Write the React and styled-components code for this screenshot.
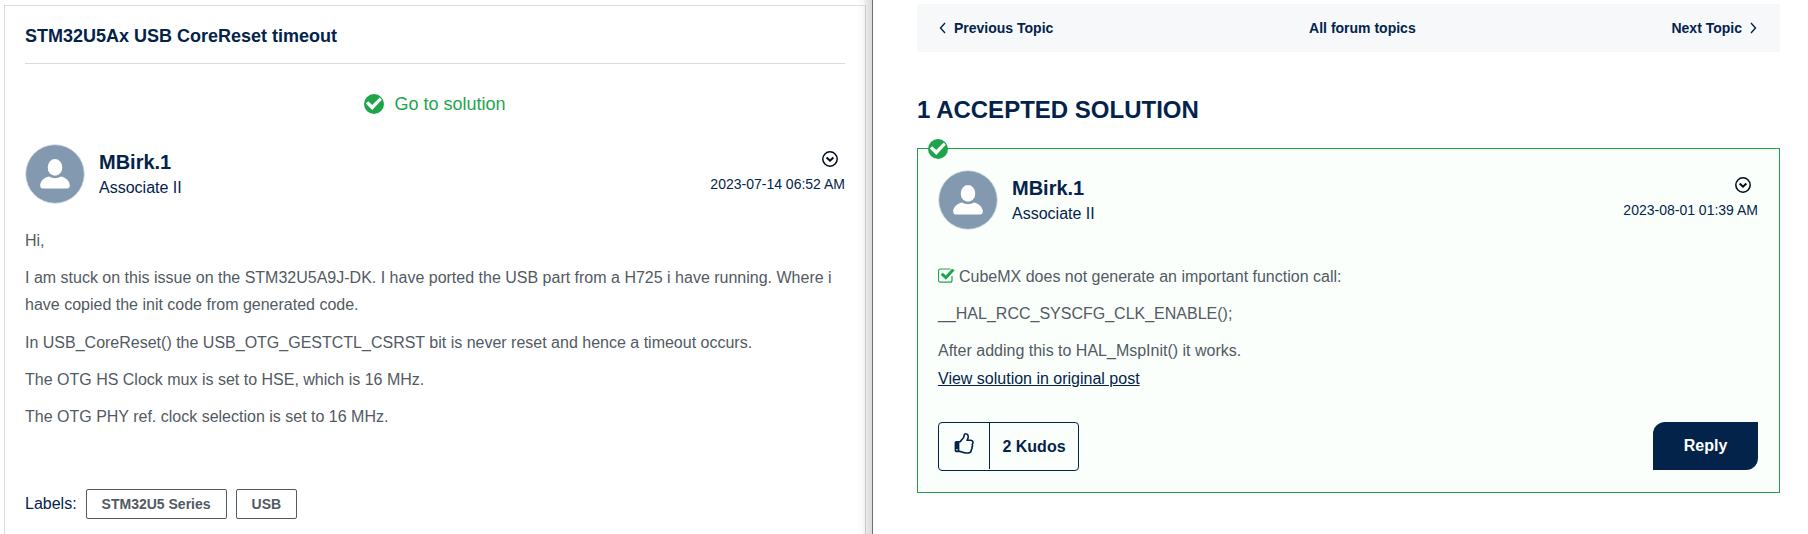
import React from 'react';
import styled, { createGlobalStyle } from 'styled-components';

const NAVY = '#03234b';
const GREEN = '#1ea54c';
const GREY = '#525a63';

const GlobalStyle = createGlobalStyle`
  *, *::before, *::after { box-sizing: border-box; }
  body {
    margin: 0;
    background: #fff;
    color: ${NAVY};
    font-family: Arial, "Liberation Sans", sans-serif;
    font-size: 16px;
    overflow: hidden;
  }
  p, h1, h2 { margin: 0; }
  svg { display: block; }
`;

const Page = styled.main`
  display: flex;
  width: 1808px;
  height: 534px;
  overflow: hidden;
`;

const QuestionPane = styled.section`
  flex: none;
  width: 873px;
  height: 534px;
  padding: 5px 6px 0 4px;
  border-right: 1px solid #6f6f6f;
  background: linear-gradient(to left, #dadada 0, #e9e9e9 6px, #f8f8f8 9px, #fff 16px);
`;

const QuestionCard = styled.article`
  height: 540px;
  padding: 0 20px;
  border: 1px solid #d8dbdf;
  border-right-color: #c9cbce;
`;

const TopicTitle = styled.h1`
  height: 58px;
  padding-top: 20px;
  border-bottom: 1px solid #d8dbdf;
  font-size: 18px;
  line-height: 20px;
`;

const SolutionLink = styled.a`
  display: flex;
  align-items: center;
  justify-content: center;
  gap: 10px;
  height: 20px;
  margin: 30px 0;
  color: ${GREEN};
  font-size: 18px;
  line-height: 20px;
`;

const Author = styled.header`
  display: flex;
  height: 60px;
`;

const AuthorText = styled.div`
  flex: 1;
  padding: 6px 0 0 14px;
`;

const AuthorName = styled.div`
  font-size: 20px;
  font-weight: bold;
  line-height: 24px;
`;

const AuthorRank = styled.div`
  padding-top: 2px;
  font-size: 16px;
  line-height: 24px;
`;

const PostMeta = styled.div`
  display: flex;
  flex-direction: column;
  align-items: flex-end;
  padding-top: 7px;
`;

const MenuIcon = styled.svg`
  margin-right: 7px;
`;

const PostDate = styled.time`
  padding-top: 9px;
  font-size: 14px;
  line-height: 16px;
`;

const PostBody = styled.div`
  padding-top: ${(p) => p.$top}px;
  color: ${GREY};
  line-height: 27.2px;

  p + p { margin-top: 10.2px; }
`;

const LabelRow = styled.div`
  display: flex;
  align-items: center;
  gap: 9px;
  margin-top: 58px;
  line-height: 30px;
`;

const Tag = styled.span`
  height: 30px;
  padding: 0 15px;
  border: 1px solid ${GREY};
  border-radius: 2px;
  color: ${GREY};
  font-size: 14px;
  font-weight: bold;
  line-height: 28px;
`;

const SolutionPane = styled.section`
  width: 863px;
  margin: 4px 0 0 44px;
`;

const TopicNav = styled.nav`
  display: flex;
  align-items: center;
  justify-content: space-between;
  height: 48px;
  padding: 0 23px 0 22px;
  background: #f6f8fa;
  font-size: 14px;
  font-weight: bold;
`;

const NavLink = styled.a`
  display: flex;
  align-items: center;
  gap: 8px;
`;

const SectionTitle = styled.h2`
  margin: 44px 0 24px;
  font-size: 24px;
  line-height: 28px;
`;

const SolutionCard = styled.article`
  position: relative;
  height: 345px;
  padding: 21px 21px 0 20px;
  border: 1px solid ${GREEN};
  background: #fbfffc;
`;

const AcceptedBadge = styled.span`
  position: absolute;
  top: -10px;
  left: 10px;
`;

const InlineCheck = styled.svg`
  display: inline-block;
  margin-right: 4px;
  vertical-align: -1px;
`;

const PostLink = styled.a`
  display: block;
  color: ${NAVY};
  text-decoration: underline;
`;

const Actions = styled.footer`
  display: flex;
  align-items: flex-start;
  justify-content: space-between;
  margin-top: 30px;
`;

const Kudos = styled.div`
  display: flex;
  width: 141px;
  height: 49px;
  border: 1px solid ${NAVY};
  border-radius: 4px;
`;

const KudosIcon = styled.span`
  display: flex;
  align-items: center;
  justify-content: center;
  width: 51px;
  height: 46px;
  padding-bottom: 4px;
  border-right: 1px solid ${NAVY};
`;

const KudosCount = styled.span`
  flex: 1;
  font-weight: bold;
  line-height: 47px;
  text-align: center;
`;

const ReplyButton = styled.button`
  width: 105px;
  height: 48px;
  padding: 0;
  border: 0;
  border-radius: 12px 0;
  background: ${NAVY};
  color: #fff;
  font: bold 16px/46px Arial, "Liberation Sans", sans-serif;
`;

const CheckCircle = () => (
  <svg width="20" height="20" viewBox="0 0 20 20">
    <circle cx="10" cy="10" r="10" fill={GREEN} />
    <path d="M1.800 9.500l2.400-2.200 4 3.800 7.500-7.600 2.200 2.300-9.700 10.200z" fill="#fff" />
  </svg>
);

const Avatar = () => (
  <svg width="60" height="60" viewBox="0 0 60 60">
    <circle cx="30" cy="30" r="29.3" fill="#8299b0" stroke="#d5dce4" strokeWidth="0.8" />
    <ellipse cx="30" cy="23.4" rx="7.3" ry="8.4" fill="#fff" />
    <path d="M24 32.500c4 2.300 8 2.300 12 0 5 1.300 8.800 4.500 8.800 9 0 1.900-1 2.900-2.600 2.900H17.800c-1.600 0-2.600-1-2.600-2.900 0-4.500 3.800-7.700 8.800-9z" fill="#fff" />
  </svg>
);

const OptionsMenu = () => (
  <MenuIcon width="16" height="16" viewBox="0 0 16 16" fill="none" stroke="#000b18">
    <circle cx="8" cy="8" r="7.2" strokeWidth="1.5" />
    <path d="M4.600 6.500L8 9.700l3.400-3.200" strokeWidth="2" />
  </MenuIcon>
);

const Chevron = ({ d }) => (
  <svg width="7" height="12" viewBox="0 0 7 12" fill="none" stroke={NAVY} strokeWidth="1.4">
    <path d={d} />
  </svg>
);

const ThumbUp = () => (
  <svg width="22.400" height="22.400" viewBox="0 0 1792 1792" fill={NAVY}>
    <path d="M384 1344q0-26-19-45t-45-19-45 19-19 45 19 45 45 19 45-19 19-45zm1152-576q0-51-39-89.5t-89-38.5h-352q0-58 48-159.5t48-160.5q0-98-32-145t-128-47q-26 26-38 85t-30.5 125.5-59.5 109.5q-22 23-77 91-4 5-23 30t-31.5 41-34.5 42.5-40 44-38.5 35.5-40 27-35.5 9h-32v640h32q13 0 31.5 3t33 6.5 38 11 35 11.5 35.5 12.5 29 10.5q211 73 342 73h121q192 0 192-167 0-26-5-56 30-16 47.5-52.5t17.5-73.5-18-69q53-50 53-119 0-25-10-55.5t-25-47.5q32-1 53.5-47t21.5-81zm128-1q0 89-49 163 9 33 9 69 0 77-38 144 3 21 3 43 0 101-60 178 1 139-85 219.5t-227 80.5h-129q-96 0-189.5-22.5t-216.5-65.5q-116-40-138-40h-288q-53 0-90.5-37.5t-37.5-90.5v-640q0-53 37.5-90.5t90.5-37.5h274q36-24 137-155 58-75 107-128 24-25 35.5-85.5t30.5-126.5 62-108q39-37 90-37 84 0 151 32.5t102 101.5 35 186q0 93-48 192h176q104 0 180 76t76 179z" />
  </svg>
);

function AuthorHeader({ date }) {
  return (
    <Author>
      <Avatar />
      <AuthorText>
        <AuthorName>MBirk.1</AuthorName>
        <AuthorRank>Associate II</AuthorRank>
      </AuthorText>
      <PostMeta>
        <OptionsMenu />
        <PostDate>{date}</PostDate>
      </PostMeta>
    </Author>
  );
}

export default function App() {
  return (
    <>
      <GlobalStyle />
      <Page>
        <QuestionPane>
          <QuestionCard>
            <TopicTitle>STM32U5Ax USB CoreReset timeout</TopicTitle>
            <SolutionLink>
              <CheckCircle />
              Go to solution
            </SolutionLink>
            <AuthorHeader date="2023-07-14 06:52 AM" />
            <PostBody $top={22.6}>
              <p>Hi,</p>
              <p>
                I am stuck on this issue on the STM32U5A9J-DK. I have ported the USB part from a H725 i have running.
                Where i have copied the init code from generated code.
              </p>
              <p>In USB_CoreReset() the USB_OTG_GESTCTL_CSRST bit is never reset and hence a timeout occurs.</p>
              <p>The OTG HS Clock mux is set to HSE, which is 16 MHz.</p>
              <p>The OTG PHY ref. clock selection is set to 16 MHz.</p>
            </PostBody>
            <LabelRow>
              Labels:
              <Tag>STM32U5 Series</Tag>
              <Tag>USB</Tag>
            </LabelRow>
          </QuestionCard>
        </QuestionPane>
        <SolutionPane>
          <TopicNav>
            <NavLink>
              <Chevron d="M6 1L1.500 6 6 11" />
              Previous Topic
            </NavLink>
            <NavLink>All forum topics</NavLink>
            <NavLink>
              Next Topic
              <Chevron d="M1 1l4.500 5L1 11" />
            </NavLink>
          </TopicNav>
          <SectionTitle>1 ACCEPTED SOLUTION</SectionTitle>
          <SolutionCard>
            <AcceptedBadge>
              <CheckCircle />
            </AcceptedBadge>
            <AuthorHeader date="2023-08-01 01:39 AM" />
            <PostBody $top={32.6}>
              <p>
                <InlineCheck width="17" height="15" viewBox="0 0 17 15">
                  <path d="M14 8v4.200a2 2 0 0 1-2 2H2.500a2 2 0 0 1-2-2V3a2 2 0 0 1 2-2h10" fill="none" stroke={GREEN} strokeWidth="1.200" />
                  <path d="M2.600 6.800l2.200-2.100 3 2.800 6.200-6.700 2.700 1.500-8.700 9.400z" fill={GREEN} />
                </InlineCheck>
                CubeMX does not generate an important function call:
              </p>
              <p>__HAL_RCC_SYSCFG_CLK_ENABLE();</p>
              <p>After adding this to HAL_MspInit() it works.</p>
              <PostLink>View solution in original post</PostLink>
            </PostBody>
            <Actions>
              <Kudos>
                <KudosIcon>
                  <ThumbUp />
                </KudosIcon>
                <KudosCount>2 Kudos</KudosCount>
              </Kudos>
              <ReplyButton>Reply</ReplyButton>
            </Actions>
          </SolutionCard>
        </SolutionPane>
      </Page>
    </>
  );
}
